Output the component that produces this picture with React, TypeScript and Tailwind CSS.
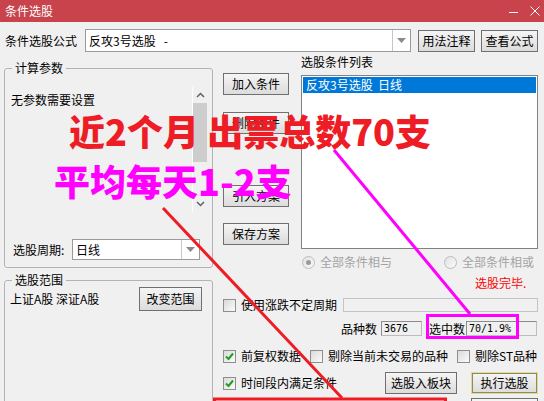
import React from "react";

function Btn({ children, className = "" }: { children?: React.ReactNode; className?: string }) {
  return (
    <div
      className={
        "h-[22px] flex items-center justify-center border border-[#707070] bg-linear-to-b from-[#f5f5f5] to-[#dcdcdc] text-[12px] leading-[14px] text-black " +
        className
      }
    >
      {children}
    </div>
  );
}

function Check({ checked = false }: { checked?: boolean }) {
  return (
    <div className="w-[13px] h-[13px] shrink-0 border border-[#8e8e8e] bg-linear-to-br from-[#dadada] to-[#fbfbfb] flex items-center justify-center">
      {checked && (
        <svg width="11" height="11" viewBox="0 0 11 11">
          <path d="M2 5.5 L4.5 8 L9 2.5" stroke="#1f9e24" strokeWidth="2" fill="none" />
        </svg>
      )}
    </div>
  );
}

function Radio({ on = false }: { on?: boolean }) {
  return (
    <div className="w-[13px] h-[13px] shrink-0 rounded-full border border-[#bcbcbc] bg-linear-to-br from-[#e2e2e2] to-[#fafafa] flex items-center justify-center">
      {on && <div className="w-[5px] h-[5px] rounded-full bg-[#9a9a9a]" />}
    </div>
  );
}

function Combo({ text, className = "" }: { text: string; className?: string }) {
  return (
    <div className={"flex border border-[#9a9a9a] bg-white " + className}>
      <div className="flex-1 flex items-center pl-[3px] whitespace-pre leading-[14px]">{text}</div>
      <div className="w-[18px] border-l border-[#c6c6c6] flex items-center justify-center">
        <svg width="9" height="5" viewBox="0 0 9 5">
          <path d="M0 0 H9 L4.5 5 Z" fill="#8a8a8a" />
        </svg>
      </div>
    </div>
  );
}

function Scrollbar() {
  return (
    <div className="w-[15px] h-[125px] border-l border-white bg-[#f0f0f0] flex flex-col items-center">
      <div className="h-[16px] flex items-center justify-center">
        <svg width="9" height="6" viewBox="0 0 9 6">
          <path d="M1 5 L4.5 1.5 L8 5" stroke="#606060" strokeWidth="1.5" fill="none" />
        </svg>
      </div>
      <div className="w-[14px] h-[59px] bg-[#cdcdcd]" />
      <div className="flex-1" />
      <div className="h-[16px] flex items-center justify-center">
        <svg width="9" height="6" viewBox="0 0 9 6">
          <path d="M1 1 L4.5 4.5 L8 1" stroke="#606060" strokeWidth="1.5" fill="none" />
        </svg>
      </div>
    </div>
  );
}

export default function App() {
  return (
    <div className="relative w-[544px] h-[401px] overflow-hidden bg-[#f0f0f0] text-[12px] leading-[14px] text-black font-['Noto_Sans_CJK_SC','Noto_Sans',sans-serif]">
      {/* title bar */}
      <div className="h-[22px] bg-[#c8434b] flex items-center pl-[5px] text-white">
        <span>条件选股</span>
        <div className="ml-auto flex items-center gap-[12px] pr-[4px]">
          <svg width="9" height="9" viewBox="0 0 9 9">
            <path d="M0 5.5 H9" stroke="#ffffff" strokeWidth="1" />
          </svg>
          <svg width="10" height="10" viewBox="0 0 10 10">
            <path d="M0.5 0.5 L9.5 9.5 M9.5 0.5 L0.5 9.5" stroke="#ffffff" strokeWidth="1" />
          </svg>
        </div>
      </div>

      {/* formula row */}
      <div className="mt-[7px] h-[23px] flex items-center">
        <span className="pl-[5px] w-[85px]">条件选股公式</span>
        <Combo text="反攻3号选股   -" className="w-[326px] h-[23px]" />
        <Btn className="ml-[7px] w-[57px]">用法注释</Btn>
        <Btn className="ml-[6px] w-[57px]">查看公式</Btn>
      </div>

      {/* main */}
      <div className="flex">
        {/* left column */}
        <div className="ml-[4px] w-[209px] flex flex-col">
          <fieldset className="mt-[9px] h-[207px] border border-[#b3b3b3] rounded-[3px]">
            <legend className="ml-[7px] px-[3px] leading-[14px]">计算参数</legend>
            <div className="flex justify-between pl-[6px] pr-[5px] pt-[12px]">
              <div className="mt-[6px]">无参数需要设置</div>
              <Scrollbar />
            </div>
            <div className="mt-[27px] h-[21px] flex items-center pl-[8px]">
              <span className="w-[59px]">选股周期:</span>
              <Combo text="日线" className="w-[128px] h-[21px]" />
            </div>
          </fieldset>
          <fieldset className="mt-[5px] h-[140px] border border-[#b3b3b3] rounded-[3px]">
            <legend className="ml-[7px] px-[3px] leading-[14px]">选股范围</legend>
            <div className="h-[24px] flex items-center justify-between pl-[5px] pr-[10px]">
              <span>上证A股 深证A股</span>
              <Btn className="w-[63px] h-[24px]">改变范围</Btn>
            </div>
          </fieldset>
        </div>

        {/* right area */}
        <div className="ml-[10px] w-[315px] flex flex-col">
          <div className="flex">
            <div className="w-[66px] flex flex-col">
              <Btn className="mt-[21px]">加入条件</Btn>
              <Btn className="mt-[17px]">删除条件</Btn>
              <Btn className="mt-[51px]">引入方案</Btn>
              <Btn className="mt-[16px]">保存方案</Btn>
            </div>
            <div className="ml-[12px] w-[237px] flex flex-col">
              <div className="mt-[3px]">选股条件列表</div>
              <div className="mt-[6px] h-[174px] border border-[#828282] bg-white p-[1px]">
                <div className="h-[16px] bg-[#0078d7] text-white pl-[3px] leading-[16px] whitespace-pre">反攻3号选股  日线</div>
              </div>
              <div className="mt-[6px] h-[14px] flex items-center text-[#a3a3a3]">
                <div className="w-[143px] flex items-center pl-[1px]">
                  <Radio on />
                  <span className="ml-[5px]">全部条件相与</span>
                </div>
                <div className="flex items-center">
                  <Radio />
                  <span className="ml-[5px]">全部条件相或</span>
                </div>
              </div>
              <div className="mt-[7px] pl-[174px] text-[#ff0000]">选股完毕.</div>
            </div>
          </div>

          <div className="mt-[8px] h-[14px] flex items-center">
            <Check />
            <span className="ml-[5px]">使用涨跌不定周期</span>
            <div className="ml-auto w-[195px] h-[14px] border border-[#c4c4c4] bg-[#f0f0f0]" />
          </div>

          <div className="mt-[9px] h-[15px] flex items-center pl-[118px]">
            <span className="w-[36px]">品种数</span>
            <div className="ml-[4px] w-[41px] h-[15px] border border-[#bcbcbc] border-l-[#8c8c8c] border-t-[#8c8c8c] bg-[#f0f0f0] pl-[2px] flex items-center text-[10px] font-['DejaVu_Sans_Mono',monospace]">3676</div>
            <span className="ml-[7px] w-[36px]">选中数</span>
            <div className="ml-[1px] w-[71px] h-[15px] border border-[#bcbcbc] border-l-[#8c8c8c] border-t-[#8c8c8c] bg-[#f0f0f0] pl-[2px] flex items-center text-[10px] font-['DejaVu_Sans_Mono',monospace]">70/1.9%</div>
          </div>

          <div className="mt-[13px] h-[14px] flex items-center">
            <Check checked />
            <span className="ml-[5px]">前复权数据</span>
            <div className="ml-[9px]"><Check /></div>
            <span className="ml-[5px]">剔除当前未交易的品种</span>
            <div className="ml-[9px]"><Check /></div>
            <span className="ml-[5px]">剔除ST品种</span>
          </div>

          <div className="mt-[9px] h-[22px] flex items-center">
            <Check checked />
            <span className="ml-[5px]">时间段内满足条件</span>
            <Btn className="ml-auto w-[72px]">选股入板块</Btn>
            <Btn className="ml-[14px] w-[67px] border-[#e6d98a] outline outline-1 outline-[#8a8a6a] -outline-offset-2">执行选股</Btn>
          </div>
          <div className="mt-[4px] flex justify-end">
            <Btn className="w-[67px]" />
          </div>
        </div>
      </div>

      {/* annotations */}
      <div className="absolute inset-0 pointer-events-none">
        <svg className="absolute left-0 top-0" width="544" height="401" viewBox="0 0 544 401">
          <line x1="163" y1="208" x2="342" y2="398" stroke="#ee1c25" strokeWidth="3" />
          <line x1="334" y1="150" x2="470" y2="314" stroke="#ff00ff" strokeWidth="3" />
          <rect x="214.5" y="399" width="231" height="30" fill="none" stroke="#ee1c25" strokeWidth="3" />
          <rect x="427.5" y="315.5" width="90" height="22" fill="none" stroke="#ff00ff" strokeWidth="3" />
        </svg>
        <div className="absolute left-[69px] top-[112px] text-[36px] leading-none font-black text-[#ee1c25] whitespace-pre">近2个月 出票总数70支</div>
        <div className="absolute left-[54px] top-[162px] text-[36px] leading-none font-black text-[#ff00ff] whitespace-pre">平均每天1-2支</div>
      </div>
    </div>
  );
}
